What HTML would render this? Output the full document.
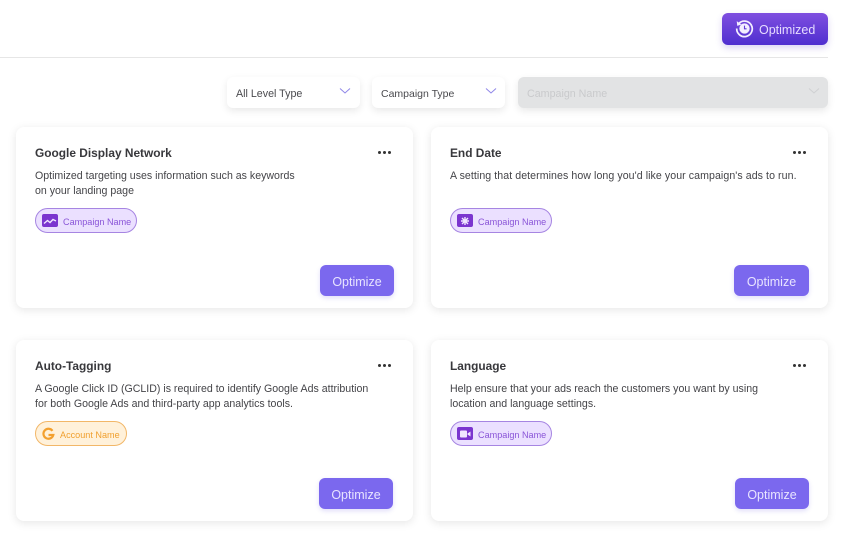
<!DOCTYPE html>
<html><head><meta charset="utf-8">
<style>
html,body{margin:0;padding:0;background:#fff}
body{width:846px;height:546px;position:relative;overflow:hidden;font-family:"Liberation Sans","DejaVu Sans",sans-serif;color:#3a3a3e}
.abs{position:absolute}
.hr{left:0;top:57px;width:828px;height:1px;background:#e6e6e6}
.top{left:722px;top:13px;width:106px;height:32px;border-radius:6px;background:linear-gradient(180deg,#7f4fe0,#4f2fcf);box-shadow:0 3px 7px rgba(90,60,200,.22);color:#e6dcff;font-size:12.5px;line-height:34px}
.top span{position:absolute;left:37px;top:0}
.dd{height:31px;top:77px;border-radius:6px;background:#fff;box-shadow:0 3px 8px rgba(0,0,0,.09);font-size:10.7px;line-height:34px;color:#4a4a4e}
.dd span{position:absolute;left:9px;top:0;white-space:nowrap}
.dd svg{position:absolute;top:10px}
.dis{background:#e2e3e4;color:#c9cacc}
.card{background:#fff;border-radius:8px;box-shadow:0 2px 9px rgba(0,0,0,.1)}
.t{position:absolute;left:19px;top:18px;font-size:11.9px;font-weight:bold;line-height:16px;color:#38383c;white-space:nowrap}
.d{position:absolute;left:19px;top:42px;font-size:10.6px;line-height:14.5px;color:#444448;white-space:nowrap}
.dots{position:absolute;top:24px;width:13px;height:4px}
.dots i{position:absolute;top:0;width:3.4px;height:3.4px;border-radius:50%;background:#333}
.tag{position:absolute;left:19px;top:81px;height:23px;border-radius:13px;border:1px solid #a685e2;background:#ebe0ff;color:#8a55d8;font-size:9.1px;line-height:26px;box-sizing:content-box}
.tag b{position:absolute;left:6px;top:5px;width:16px;height:13px;border-radius:2px;background:#7b35cf}
.tag span{position:absolute;left:27px;top:0;white-space:nowrap;font-weight:normal}
.tag svg{position:absolute;left:0;top:0}
.or{border-color:#f2b768;background:#fff1da;color:#f0a030}
.btn{position:absolute;top:138px;height:31px;border-radius:6px;background:#7b68ee;box-shadow:0 2px 5px rgba(90,70,220,.18);color:#e8e4ff;font-size:12.5px;line-height:34px;text-align:center}
</style></head><body>
<div class="abs hr"></div>
<div class="abs top">
<svg class="abs" style="left:13px;top:6px" width="19" height="19" viewBox="0 0 22 22"><path d="M4.200 5.500A9 9 0 1 1 2 11" fill="none" stroke="#f3eeff" stroke-width="2"/><path d="M2 2.500l.6 5.500 5-1.600z" fill="#f3eeff"/><circle cx="11" cy="11" r="6" fill="#f3eeff"/><path d="M11 7.600V11.300h2.400" fill="none" stroke="#5f39d6" stroke-width="1.300"/></svg>
<span>Optimized</span></div>

<div class="abs dd" style="left:227px;width:133px"><span>All Level Type</span><svg style="left:112px" width="12" height="8" viewBox="0 0 12 8"><path d="M1 1.500l5 4.500 5-4.500" fill="none" stroke="#8f86e8" stroke-width="1"/></svg></div>
<div class="abs dd" style="left:372px;width:133px"><span style="font-size:10.500px">Campaign Type</span><svg style="left:113px" width="12" height="8" viewBox="0 0 12 8"><path d="M1 1.500l5 4.500 5-4.500" fill="none" stroke="#8f86e8" stroke-width="1"/></svg></div>
<div class="abs dd dis" style="left:518px;width:310px"><span>Campaign Name</span><svg style="left:290px" width="12" height="8" viewBox="0 0 12 8"><path d="M1 1.500l5 4.500 5-4.500" fill="none" stroke="#cfd0d2" stroke-width="1"/></svg></div>

<div class="abs card" style="left:16px;top:127px;width:397px;height:181px">
<div class="t">Google Display Network</div>
<div class="d">Optimized targeting uses information such as keywords<br>on your landing page</div>
<div class="dots" style="left:362px"><i style="left:0"></i><i style="left:5px"></i><i style="left:10px"></i></div>
<div class="tag" style="width:100px"><b></b><svg width="28" height="24" viewBox="0 0 28 24"><path d="M8 14.500l3.500-3 2.500 2 3-3 3 1.500" fill="none" stroke="#f0e6ff" stroke-width="1.400"/></svg><span>Campaign Name</span></div>
<div class="btn" style="left:304px;width:74px">Optimize</div>
</div>

<div class="abs card" style="left:431px;top:127px;width:397px;height:181px">
<div class="t">End Date</div>
<div class="d" style="letter-spacing:.07px">A setting that determines how long you'd like your campaign's ads to run.</div>
<div class="dots" style="left:362px"><i style="left:0"></i><i style="left:5px"></i><i style="left:10px"></i></div>
<div class="tag" style="width:100px"><b></b><svg width="28" height="24" viewBox="0 0 28 24"><path d="M14 8v8M10 12h8M11 9l6 6M17 9l-6 6" fill="none" stroke="#f0e6ff" stroke-width="1.400"/></svg><span>Campaign Name</span></div>
<div class="btn" style="left:303px;width:75px">Optimize</div>
</div>

<div class="abs card" style="left:16px;top:340px;width:397px;height:181px">
<div class="t">Auto-Tagging</div>
<div class="d">A Google Click ID (GCLID) is required to identify Google Ads attribution<br>for both Google Ads and third-party app analytics tools.</div>
<div class="dots" style="left:362px"><i style="left:0"></i><i style="left:5px"></i><i style="left:10px"></i></div>
<div class="tag or" style="width:90px"><svg width="28" height="24" viewBox="0 0 28 24"><path d="M16.500 8.800A5 5 0 1 0 17.300 13H12.500" fill="none" stroke="#f3a02e" stroke-width="2.200"/></svg><span style="left:24px">Account Name</span></div>
<div class="btn" style="left:303px;width:74px">Optimize</div>
</div>

<div class="abs card" style="left:431px;top:340px;width:397px;height:181px">
<div class="t">Language</div>
<div class="d">Help ensure that your ads reach the customers you want by using<br>location and language settings.</div>
<div class="dots" style="left:362px"><i style="left:0"></i><i style="left:5px"></i><i style="left:10px"></i></div>
<div class="tag" style="width:100px"><b></b><svg width="28" height="24" viewBox="0 0 28 24"><rect x="9" y="8.500" width="7" height="7" rx="1" fill="#f0e6ff"/><path d="M16.500 11.500l3-2v5l-3-2z" fill="#f0e6ff"/></svg><span>Campaign Name</span></div>
<div class="btn" style="left:304px;width:74px">Optimize</div>
</div>
</body></html>
